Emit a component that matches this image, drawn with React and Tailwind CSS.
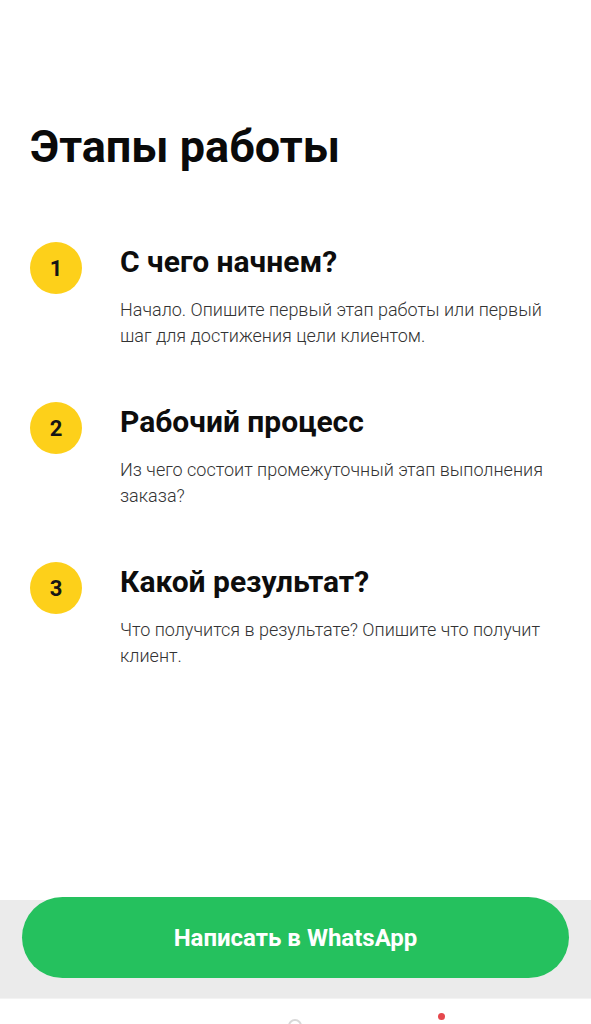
const steps = [
  {
    n: 1,
    title: 'С чего начнем?',
    text: 'Начало. Опишите первый этап работы или первый шаг для достижения цели клиентом.',
  },
  {
    n: 2,
    title: 'Рабочий процесс',
    text: 'Из чего состоит промежуточный этап выполнения заказа?',
  },
  {
    n: 3,
    title: 'Какой результат?',
    text: 'Что получится в результате? Опишите что получит клиент.',
  },
];

const Step = ({ n, title, text }) => (
  <div className="flex items-start gap-[38px]">
    <div className="w-[52px] h-[52px] shrink-0 rounded-full bg-[#fdd01a] flex items-center justify-center text-[22px] font-bold text-[#151515]">
      {n}
    </div>
    <div className="flex-1 min-w-0 pt-[2px]">
      <h3 className="text-[30px] leading-[1.2] font-bold text-[#0d0d0d]">{title}</h3>
      <p className="mt-[17px] text-[18px] leading-[26px] font-light text-[#333333]">{text}</p>
    </div>
  </div>
);

const App = () => {
  return (
    <div className="h-[1024px] flex flex-col bg-white overflow-hidden font-['Roboto',sans-serif]">
      <div className="flex-1 px-[30px] pt-[120px]">
        <h1 className="text-[45px] leading-[1.2] font-bold text-[#0a0a0a]">Этапы работы</h1>
        <div className="mt-[68px] flex flex-col gap-[53px]">
          {steps.map((s) => (
            <Step key={s.n} {...s} />
          ))}
        </div>
      </div>

      {/* sticky action bar */}
      <div className="h-[98px] bg-[#ebebeb] px-[22px]">
        <button className="-mt-[3px] w-full h-[81px] rounded-full bg-[#25c15e] text-white text-[24px] font-bold">
          Написать в WhatsApp
        </button>
      </div>

      {/* bottom nav peeking in */}
      <div className="h-[26px] bg-white border-t border-[#f3f3f3] relative">
        <div className="absolute left-[288px] top-[20px] w-[14px] h-[14px] rounded-full border-2 border-[#d8d8d8]" />
        <div className="absolute left-[438px] top-[14px] w-[7px] h-[7px] rounded-full bg-[#e5484d]" />
      </div>
    </div>
  );
};

export default App;
